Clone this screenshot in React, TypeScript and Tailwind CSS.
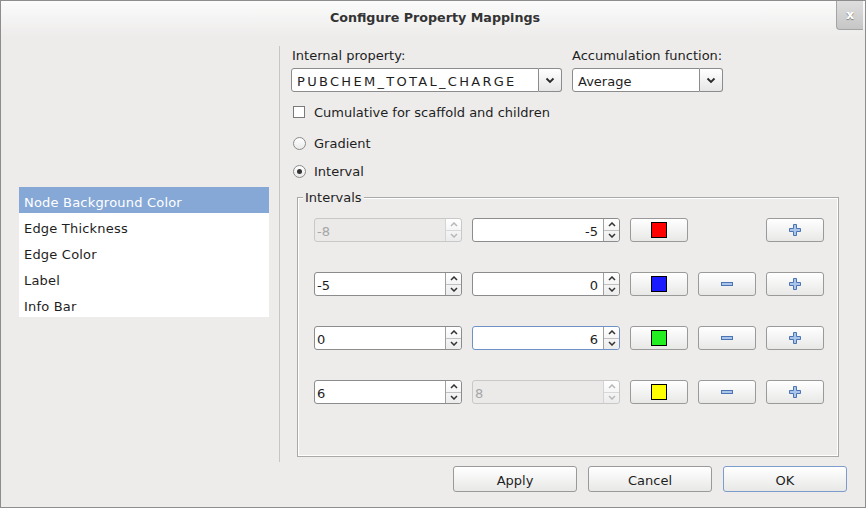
import React from "react";

const Chevron = ({ up, disabled }: { up?: boolean; disabled?: boolean }) => (
  <svg width="8" height="5" viewBox="0 0 8 5" className="block">
    <path
      d={up ? "M1 4 L4 1 L7 4" : "M1 1 L4 4 L7 1"}
      fill="none"
      stroke={disabled ? "#b8b8b8" : "#333"}
      strokeWidth="1.5"
    />
  </svg>
);

const Spin = ({
  value,
  right,
  disabled,
  focused,
}: {
  value: string;
  right?: boolean;
  disabled?: boolean;
  focused?: boolean;
}) => {
  const box = disabled
    ? "border-[#c8c8c8] bg-[#ebeae9] text-[#a6a6a6]"
    : focused
    ? "border-[#6f92c6] bg-white text-[#1e1e1e]"
    : "border-[#8c8c8c] bg-white text-[#1e1e1e]";
  return (
    <div className={`flex h-[24px] w-[148px] rounded-[3px] border ${box}`}>
      <div
        className={`flex flex-1 items-center ${
          right ? "justify-end pr-[5px]" : "pl-[2px]"
        }`}
      >
        <span className="translate-y-[2px]">{value}</span>
      </div>
      <div
        className={`flex w-[16px] flex-col border-l ${
          disabled ? "border-[#d4d4d4]" : "border-[#a0a0a0]"
        } rounded-r-[3px] bg-gradient-to-b from-white to-[#ececec]`}
      >
        <div
          className={`flex flex-1 items-center justify-center border-b ${
            disabled ? "border-[#d8d8d8]" : "border-[#c0c0c0]"
          }`}
        >
          <Chevron up disabled={disabled} />
        </div>
        <div className="flex flex-1 items-center justify-center">
          <Chevron disabled={disabled} />
        </div>
      </div>
    </div>
  );
};

const Btn = ({
  children,
  w,
  focused,
}: {
  children: React.ReactNode;
  w: string;
  focused?: boolean;
}) => (
  <div
    className={`flex h-[26px] ${w} items-center justify-center rounded-[3px] border ${
      focused ? "border-[#7c9ccb]" : "border-[#9a9a9a]"
    } bg-gradient-to-b from-white to-[#e8e8e7] text-[#1e1e1e]`}
  >
    <span className="translate-y-[2px]">{children}</span>
  </div>
);

const ColorBtn = ({ color }: { color: string }) => (
  <div className="flex h-[24px] w-[58px] items-center justify-center rounded-[3px] border border-[#9a9a9a] bg-gradient-to-b from-white to-[#e8e8e7]">
    <div
      className="h-[16px] w-[16px] border border-black"
      style={{ backgroundColor: color }}
    />
  </div>
);

const PlusIcon = () => (
  <svg width="14" height="14" viewBox="0 0 14 14">
    <polygon
      points="5.5,1.5 8.5,1.5 8.5,5.5 12.5,5.5 12.5,8.5 8.5,8.5 8.5,12.5 5.5,12.5 5.5,8.5 1.5,8.5 1.5,5.5 5.5,5.5"
      fill="#a9c5ea"
      stroke="#4a74b4"
      strokeWidth="1"
    />
  </svg>
);

const MinusIcon = () => (
  <svg width="14" height="6" viewBox="0 0 14 6">
    <rect x="1.5" y="1.5" width="11" height="3" fill="#a9c5ea" stroke="#4a74b4" strokeWidth="1" />
  </svg>
);

const IconBtn = ({ children }: { children: React.ReactNode }) => (
  <div className="flex h-[24px] w-[58px] items-center justify-center rounded-[3px] border border-[#9a9a9a] bg-gradient-to-b from-white to-[#e8e8e7]">
    {children}
  </div>
);

const Combo = ({ value, w, wide }: { value: string; w: string; wide?: boolean }) => (
  <div className={`flex h-[24px] ${w}`}>
    <div className="flex flex-1 items-center rounded-l-[3px] border border-[#8c8c8c] bg-white pl-[5px] text-[#1e1e1e]">
      <span className={`translate-y-[2px] ${wide ? "tracking-[2.3px]" : ""}`}>{value}</span>
    </div>
    <div className="flex w-[23px] items-center justify-center rounded-r-[3px] border border-l-0 border-[#8c8c8c] bg-gradient-to-b from-white to-[#e6e6e6]">
      <svg width="10" height="7" viewBox="0 0 10 7">
        <path d="M1.5 1.5 L5 5 L8.5 1.5" fill="none" stroke="#2a2a2a" strokeWidth="1.8" />
      </svg>
    </div>
  </div>
);

const Radio = ({ checked }: { checked?: boolean }) => (
  <div className="flex h-[13px] w-[13px] items-center justify-center rounded-full border border-[#8a8a8a] bg-gradient-to-b from-white to-[#eaeaea]">
    {checked && <div className="h-[5px] w-[5px] rounded-full bg-[#333]" />}
  </div>
);

const rows = [
  { from: "-8", to: "-5", color: "#ff0000", fromDis: true, toDis: false, minus: false },
  { from: "-5", to: "0", color: "#1a1aff", fromDis: false, toDis: false, minus: true },
  { from: "0", to: "6", color: "#22ee22", fromDis: false, toDis: false, minus: true, focused: true },
  { from: "6", to: "8", color: "#ffff00", fromDis: false, toDis: true, minus: true },
];

export default function App() {
  return (
    <div className="relative h-[508px] w-[866px] overflow-hidden border border-[#8d8d8d] bg-[#edeceb] font-['DejaVu_Sans',sans-serif] text-[13px] leading-[16px] text-[#1e1e1e]">
      {/* Title bar */}
      <div className="flex h-[34px] items-center justify-center bg-gradient-to-b from-[#fbfbfb] to-[#eeedec]">
        <span className="translate-x-[2px] text-[12.7px] font-bold text-[#333]">
          Configure Property Mappings
        </span>
      </div>
      <div className="absolute right-[2px] top-0 flex h-[29px] w-[27px] items-center justify-center rounded-bl-[4px] border-b border-l border-[#a4a4a4] bg-gradient-to-b from-[#dedede] to-[#c6c6c6] text-[12px] font-bold text-white [text-shadow:0_1px_1px_#777]">
        x
      </div>

      {/* Main */}
      <div className="flex h-[427px] pt-[11px]">
        {/* Left list */}
        <div className="w-[278px] pl-[18px] pr-[10px] pt-[141px]">
          <div className="flex flex-col bg-white">
            {["Node Background Color", "Edge Thickness", "Edge Color", "Label", "Info Bar"].map(
              (t, i) => (
                <div
                  key={t}
                  className={`flex h-[26px] items-center pl-[5px] ${
                    i === 0 ? "bg-[#86a8d6] text-white" : "text-[#1e1e1e]"
                  }`}
                >
                  <span className="translate-y-[3px] tracking-[0.2px]">{t}</span>
                </div>
              )
            )}
          </div>
        </div>
        {/* Separator */}
        <div className="w-px bg-[#c6c6c6]" />
        {/* Right */}
        <div className="flex flex-1 flex-col pl-[11px]">
          <div className="flex gap-[10px]">
            <div className="flex w-[271px] flex-col gap-[6px]">
              <div className="h-[16px] pl-px">
                <span className="inline-block translate-y-[2px]">Internal property:</span>
              </div>
              <Combo value="PUBCHEM_TOTAL_CHARGE" w="w-[271px]" wide />
            </div>
            <div className="flex w-[151px] flex-col gap-[6px]">
              <div className="h-[16px]">
                <span className="inline-block translate-y-[2px]">Accumulation function:</span>
              </div>
              <Combo value="Average" w="w-[151px]" />
            </div>
          </div>
          <div className="mt-[12px] flex h-[16px] items-center">
            <div className="ml-[2px] h-[12px] w-[12px] border border-[#7a7a7a] bg-white" />
            <span className="ml-[9px] translate-y-[1px]">Cumulative for scaffold and children</span>
          </div>
          <div className="mt-[15px] flex h-[16px] items-center">
            <div className="ml-[2px]">
              <Radio />
            </div>
            <span className="ml-[8px] translate-y-[1px]">Gradient</span>
          </div>
          <div className="mt-[12px] flex h-[16px] items-center">
            <div className="ml-[2px]">
              <Radio checked />
            </div>
            <span className="ml-[8px] translate-y-[1px]">Interval</span>
          </div>
          {/* Intervals group */}
          <div className="relative ml-[6px] mt-[18px] h-[260px] w-[542px] border border-[#a9a9a9] shadow-[inset_1px_1px_0_#ffffff,inset_-1px_-1px_0_#ffffff]">
            <div className="absolute left-[5px] top-[-8px] bg-[#edeceb] pl-[2px] pr-[2px] leading-[16px]">
              Intervals
            </div>
            <div className="flex flex-col gap-[30px] pl-[16px] pt-[20px]">
              {rows.map((r, i) => (
                <div key={i} className="flex gap-[10px]">
                  <Spin value={r.from} disabled={r.fromDis} />
                  <Spin value={r.to} right={!r.toDis} disabled={r.toDis} focused={r.focused} />
                  <ColorBtn color={r.color} />
                  {r.minus ? (
                    <IconBtn>
                      <MinusIcon />
                    </IconBtn>
                  ) : (
                    <div className="w-[58px]" />
                  )}
                  <IconBtn>
                    <PlusIcon />
                  </IconBtn>
                </div>
              ))}
            </div>
          </div>
        </div>
      </div>

      {/* Bottom buttons */}
      <div className="flex justify-end gap-[11px] pr-[18px] pt-[4px]">
        <Btn w="w-[124px]">Apply</Btn>
        <Btn w="w-[124px]">Cancel</Btn>
        <Btn w="w-[124px]" focused>
          OK
        </Btn>
      </div>
    </div>
  );
}
